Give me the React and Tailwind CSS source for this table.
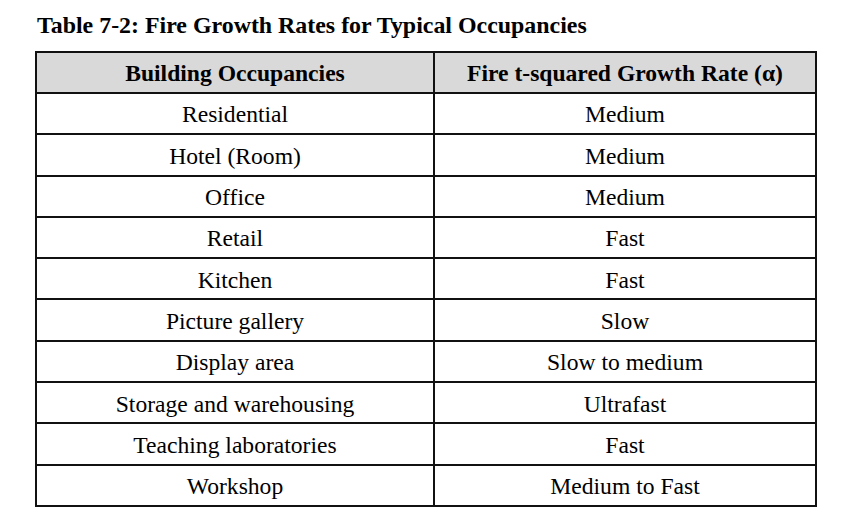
import React from 'react';

const rows = [
    ['Residential', 'Medium'],
    ['Hotel (Room)', 'Medium'],
    ['Office', 'Medium'],
    ['Retail', 'Fast'],
    ['Kitchen', 'Fast'],
    ['Picture gallery', 'Slow'],
    ['Display area', 'Slow to medium'],
    ['Storage and warehousing', 'Ultrafast'],
    ['Teaching laboratories', 'Fast'],
    ['Workshop', 'Medium to Fast'],
];

const App = () => {
    return (
        <div className="w-[847px] h-[515px] bg-white text-black font-['Liberation_Serif','Times_New_Roman',serif] overflow-hidden">
            <h1 className="pl-[37px] pt-[11px] h-[51px] text-[23.9px] leading-[28px] font-bold">
                Table 7-2: Fire Growth Rates for Typical Occupancies
            </h1>

            <div className="ml-[35px] w-[782px] border-2 border-[#111]">
                <div className="grid grid-cols-[396px_1fr] h-[39px] bg-[#d9d9d9] text-[23.6px] font-bold">
                    <div className="flex items-center justify-center pt-[2px]">Building Occupancies</div>
                    <div className="flex items-center justify-center pt-[2px] border-l-2 border-[#111]">Fire t-squared Growth Rate (α)</div>
                </div>
                {rows.map(([occ, rate]) => (
                    <div key={occ} className="grid grid-cols-[396px_1fr] h-[41.3px] border-t-2 border-[#111] text-[23.6px]">
                        <div className="flex items-center justify-center pt-[3px]">{occ}</div>
                        <div className="flex items-center justify-center pt-[3px] border-l-2 border-[#111]">{rate}</div>
                    </div>
                ))}
            </div>
        </div>
    );
};

export default App;
